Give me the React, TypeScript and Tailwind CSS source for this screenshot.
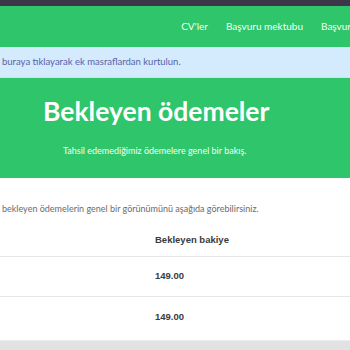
export default function App() {
  const rows = ["149.00", "149.00"];
  return (
    <div className="w-[350px] h-[350px] overflow-hidden bg-white font-['Lato',sans-serif]">
      <div className="h-[6px] bg-[#3d3649]" />
      <nav className="h-[41px] bg-[#2fc56b] flex items-center justify-end gap-[18px] whitespace-nowrap">
        <a className="text-[10px] text-[#f3fff6]">CV'ler</a>
        <a className="text-[10px] text-[#f3fff6]">Başvuru mektubu</a>
        <a className="text-[10px] text-[#f3fff6] w-[29px] overflow-hidden">Başvuru</a>
      </nav>
      <div className="h-[31px] bg-[#d3ebfd] flex items-center pl-[2px] border-b border-[#c6e4f8]">
        <span className="text-[9.5px] text-[#5a62a8] whitespace-nowrap">buraya tıklayarak ek masraflardan kurtulun.</span>
      </div>
      <section className="h-[100px] bg-[#2fc56b] pl-[43px] pt-[14px]">
        <h1 className="text-[26.5px] leading-[38px] font-bold text-white whitespace-nowrap">Bekleyen ödemeler</h1>
        <p className="text-[9px] text-[#f3fff6] mt-[14px] ml-[20px] whitespace-nowrap">Tahsil edemediğimiz ödemelere genel bir bakış.</p>
      </section>
      <div className="pt-[24px] pl-[2px]">
        <p className="text-[9px] text-[#6b6b6b] whitespace-nowrap">bekleyen ödemelerin genel bir görünümünü aşağıda görebilirsiniz.</p>
      </div>
      <table className="w-full mt-[8px] border-collapse font-['Liberation_Sans',sans-serif]">
        <thead>
          <tr className="h-[33px] border-b border-[#e6e6e6]">
            <th className="w-[155px]" />
            <th className="text-left text-[9.5px] font-bold text-[#3a3a3a]">Bekleyen bakiye</th>
          </tr>
        </thead>
        <tbody>
          {rows.map((r, i) => (
            <tr key={i} className={`h-[40px] ${i === 0 ? "border-b border-[#e6e6e6]" : ""}`}>
              <td />
              <td className="text-left text-[9.5px] font-bold text-[#3a3a3a]">{r}</td>
            </tr>
          ))}
        </tbody>
      </table>
      <div className="mt-[3px] h-[14px] bg-[#e2e2e2] border-t border-[#ececec]" />
    </div>
  );
}
